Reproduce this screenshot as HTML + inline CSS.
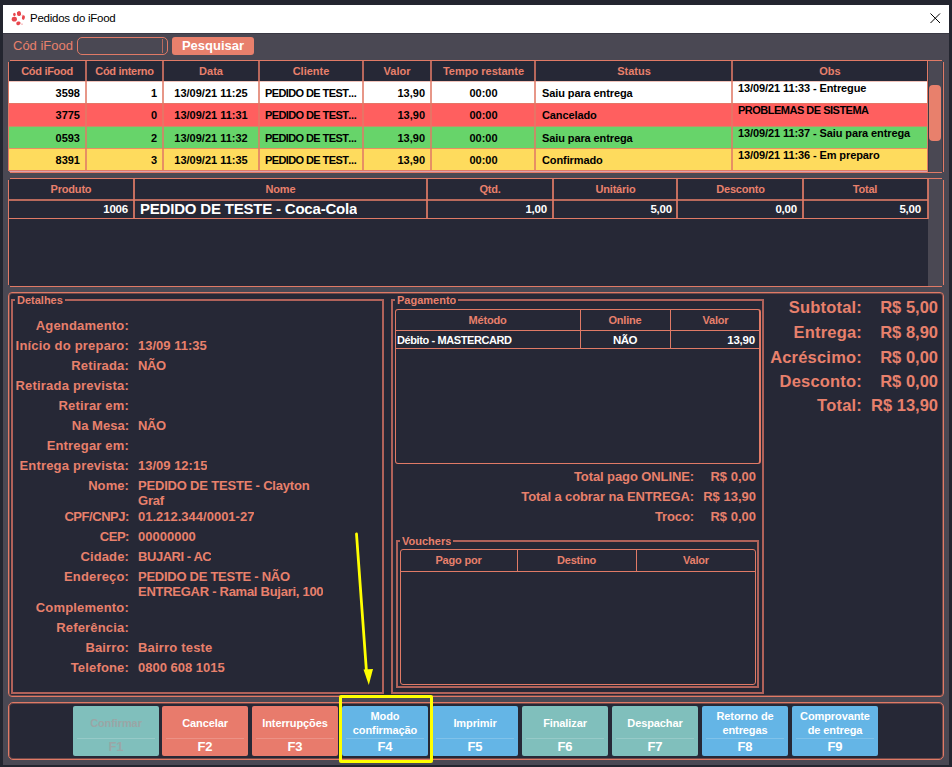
<!DOCTYPE html>
<html><head><meta charset="utf-8">
<style>
*{margin:0;padding:0;box-sizing:border-box}
html,body{width:952px;height:767px;overflow:hidden;background:#23252f;font-family:"Liberation Sans",sans-serif}
.a{position:absolute}
.t{white-space:nowrap;overflow:hidden}
</style></head><body>
<div class="a" style="left:0px;top:0px;width:952px;height:767px;background:#23252f"></div>
<div class="a" style="left:3px;top:5px;width:946px;height:760px;background:#4a4853"></div>
<div class="a" style="left:3px;top:5px;width:946px;height:28px;background:#fff"></div>
<div class="a" style="left:3px;top:33px;width:946px;height:1px;background:#3a3944"></div>
<svg class="a" style="left:10px;top:10px" width="16" height="16" viewBox="0 0 16 16"><g fill="#e8474d">
<ellipse cx="9" cy="3.6" rx="2.1" ry="2.5" transform="rotate(-15 9 3.6)"/><ellipse cx="4.4" cy="4.5" rx="1.3" ry="1.8"/><ellipse cx="4.3" cy="9.2" rx="2.6" ry="2.4"/>
<ellipse cx="8.4" cy="13.3" rx="2.2" ry="1.8" transform="rotate(-20 8.4 13.3)"/><ellipse cx="13.4" cy="7.6" rx="1.5" ry="2.3" transform="rotate(10 13.4 7.6)"/>
<circle cx="12.3" cy="5.4" r="0.8" opacity="0.35"/><circle cx="12" cy="14.2" r="0.9" opacity="0.35"/></g></svg>
<div class="a t" style="left:30px;top:12px;font-size:11.5px;color:#000;letter-spacing:-0.25px">Pedidos do iFood</div>
<svg class="a" style="left:930px;top:13px" width="11" height="11" viewBox="0 0 11 11"><path d="M0.5 0.5L10 10M10 0.5L0.5 10" stroke="#000" stroke-width="1"/></svg>
<div class="a t" style="left:13px;top:38px;font-size:13px;color:#e8806c">Cód iFood</div>
<div class="a" style="left:77px;top:37px;width:91px;height:18px;border:1px solid #e07a66;border-radius:5px"></div>
<div class="a" style="left:162px;top:39px;width:1px;height:14px;background:#b86a5e"></div>
<div class="a t" style="left:172px;top:37px;width:82px;height:18px;line-height:18px;text-align:center;font-size:13px;font-weight:bold;color:#fff;background:#e8806c;border-radius:3px">Pesquisar</div>
<div class="a" style="left:8px;top:60px;width:936px;height:113px;background:#4a4853"></div>
<div class="a" style="left:8px;top:62px;width:1px;height:109px;background:#e07a66"></div>
<div class="a" style="left:10px;top:60px;width:932px;height:1px;background:#e07a66"></div>
<div class="a" style="left:943px;top:62px;width:1px;height:110px;background:#e07a66"></div>
<div class="a" style="left:10px;top:172px;width:932px;height:1px;background:#e07a66"></div>
<div class="a" style="left:9px;top:61px;width:919px;height:20px;background:#262836;border-top-left-radius:2px"></div>
<div class="a t" style="left:8px;top:61px;width:78px;height:20px;line-height:20px;text-align:center;font-size:11px;font-weight:bold;color:#e8806c;letter-spacing:-0.3px">Cód iFood</div>
<div class="a t" style="left:86px;top:61px;width:77px;height:20px;line-height:20px;text-align:center;font-size:11px;font-weight:bold;color:#e8806c;letter-spacing:-0.3px">Cód interno</div>
<div class="a t" style="left:163px;top:61px;width:96px;height:20px;line-height:20px;text-align:center;font-size:11px;font-weight:bold;color:#e8806c;letter-spacing:0">Data</div>
<div class="a t" style="left:259px;top:61px;width:104px;height:20px;line-height:20px;text-align:center;font-size:11px;font-weight:bold;color:#e8806c;letter-spacing:0">Cliente</div>
<div class="a t" style="left:363px;top:61px;width:68px;height:20px;line-height:20px;text-align:center;font-size:11px;font-weight:bold;color:#e8806c;letter-spacing:0">Valor</div>
<div class="a t" style="left:431px;top:61px;width:105px;height:20px;line-height:20px;text-align:center;font-size:11px;font-weight:bold;color:#e8806c;letter-spacing:0">Tempo restante</div>
<div class="a t" style="left:536px;top:61px;width:196px;height:20px;line-height:20px;text-align:center;font-size:11px;font-weight:bold;color:#e8806c;letter-spacing:0">Status</div>
<div class="a t" style="left:732px;top:61px;width:196px;height:20px;line-height:20px;text-align:center;font-size:11px;font-weight:bold;color:#e8806c;letter-spacing:0">Obs</div>
<div class="a" style="left:9px;top:81px;width:919px;height:22px;background:#ffffff"></div>
<div class="a" style="left:9px;top:81px;width:919px;height:1px;background:rgba(224,122,102,0.45)"></div>
<div class="a t" style="left:8px;top:82px;width:78px;height:22px;line-height:22px;text-align:right;font-size:11px;font-weight:bold;color:#000;letter-spacing:0;padding:0 6px;box-sizing:border-box">3598</div>
<div class="a t" style="left:86px;top:82px;width:77px;height:22px;line-height:22px;text-align:right;font-size:11px;font-weight:bold;color:#000;letter-spacing:0;padding:0 6px;box-sizing:border-box">1</div>
<div class="a t" style="left:163px;top:82px;width:96px;height:22px;line-height:22px;text-align:center;font-size:11px;font-weight:bold;color:#000;letter-spacing:0;padding:0 6px;box-sizing:border-box">13/09/21 11:25</div>
<div class="a t" style="left:259px;top:82px;width:104px;height:22px;line-height:22px;text-align:left;font-size:11px;font-weight:bold;color:#000;letter-spacing:-0.6px;padding:0 6px;box-sizing:border-box">PEDIDO DE TEST<span style="letter-spacing:-0.3px">...</span></div>
<div class="a t" style="left:363px;top:82px;width:68px;height:22px;line-height:22px;text-align:right;font-size:11px;font-weight:bold;color:#000;letter-spacing:0;padding:0 6px;box-sizing:border-box">13,90</div>
<div class="a t" style="left:431px;top:82px;width:105px;height:22px;line-height:22px;text-align:center;font-size:11px;font-weight:bold;color:#000;letter-spacing:0;padding:0 6px;box-sizing:border-box">00:00</div>
<div class="a t" style="left:536px;top:82px;width:196px;height:22px;line-height:22px;text-align:left;font-size:11px;font-weight:bold;color:#000;letter-spacing:-0.1px;padding:0 6px;box-sizing:border-box">Saiu para entrega</div>
<div class="a t" style="left:732px;top:77px;width:196px;height:22px;line-height:22px;text-align:left;font-size:11px;font-weight:bold;color:#000;letter-spacing:-0.1px;padding:0 6px;box-sizing:border-box">13/09/21 11:33 - Entregue</div>
<div class="a" style="left:9px;top:103px;width:919px;height:23px;background:#ff5f5f"></div>
<div class="a" style="left:9px;top:103px;width:919px;height:1px;background:rgba(224,122,102,0.8)"></div>
<div class="a t" style="left:8px;top:104px;width:78px;height:22px;line-height:22px;text-align:right;font-size:11px;font-weight:bold;color:#000;letter-spacing:0;padding:0 6px;box-sizing:border-box">3775</div>
<div class="a t" style="left:86px;top:104px;width:77px;height:22px;line-height:22px;text-align:right;font-size:11px;font-weight:bold;color:#000;letter-spacing:0;padding:0 6px;box-sizing:border-box">0</div>
<div class="a t" style="left:163px;top:104px;width:96px;height:22px;line-height:22px;text-align:center;font-size:11px;font-weight:bold;color:#000;letter-spacing:0;padding:0 6px;box-sizing:border-box">13/09/21 11:31</div>
<div class="a t" style="left:259px;top:104px;width:104px;height:22px;line-height:22px;text-align:left;font-size:11px;font-weight:bold;color:#000;letter-spacing:-0.6px;padding:0 6px;box-sizing:border-box">PEDIDO DE TEST<span style="letter-spacing:-0.3px">...</span></div>
<div class="a t" style="left:363px;top:104px;width:68px;height:22px;line-height:22px;text-align:right;font-size:11px;font-weight:bold;color:#000;letter-spacing:0;padding:0 6px;box-sizing:border-box">13,90</div>
<div class="a t" style="left:431px;top:104px;width:105px;height:22px;line-height:22px;text-align:center;font-size:11px;font-weight:bold;color:#000;letter-spacing:0;padding:0 6px;box-sizing:border-box">00:00</div>
<div class="a t" style="left:536px;top:104px;width:196px;height:22px;line-height:22px;text-align:left;font-size:11px;font-weight:bold;color:#000;letter-spacing:-0.1px;padding:0 6px;box-sizing:border-box">Cancelado</div>
<div class="a t" style="left:732px;top:99px;width:196px;height:22px;line-height:22px;text-align:left;font-size:11px;font-weight:bold;color:#000;letter-spacing:-0.5px;padding:0 6px;box-sizing:border-box">PROBLEMAS DE SISTEMA</div>
<div class="a" style="left:9px;top:126px;width:919px;height:22px;background:#67d46a"></div>
<div class="a" style="left:9px;top:126px;width:919px;height:1px;background:rgba(224,122,102,0.8)"></div>
<div class="a t" style="left:8px;top:127px;width:78px;height:22px;line-height:22px;text-align:right;font-size:11px;font-weight:bold;color:#000;letter-spacing:0;padding:0 6px;box-sizing:border-box">0593</div>
<div class="a t" style="left:86px;top:127px;width:77px;height:22px;line-height:22px;text-align:right;font-size:11px;font-weight:bold;color:#000;letter-spacing:0;padding:0 6px;box-sizing:border-box">2</div>
<div class="a t" style="left:163px;top:127px;width:96px;height:22px;line-height:22px;text-align:center;font-size:11px;font-weight:bold;color:#000;letter-spacing:0;padding:0 6px;box-sizing:border-box">13/09/21 11:32</div>
<div class="a t" style="left:259px;top:127px;width:104px;height:22px;line-height:22px;text-align:left;font-size:11px;font-weight:bold;color:#000;letter-spacing:-0.6px;padding:0 6px;box-sizing:border-box">PEDIDO DE TEST<span style="letter-spacing:-0.3px">...</span></div>
<div class="a t" style="left:363px;top:127px;width:68px;height:22px;line-height:22px;text-align:right;font-size:11px;font-weight:bold;color:#000;letter-spacing:0;padding:0 6px;box-sizing:border-box">13,90</div>
<div class="a t" style="left:431px;top:127px;width:105px;height:22px;line-height:22px;text-align:center;font-size:11px;font-weight:bold;color:#000;letter-spacing:0;padding:0 6px;box-sizing:border-box">00:00</div>
<div class="a t" style="left:536px;top:127px;width:196px;height:22px;line-height:22px;text-align:left;font-size:11px;font-weight:bold;color:#000;letter-spacing:-0.1px;padding:0 6px;box-sizing:border-box">Saiu para entrega</div>
<div class="a t" style="left:732px;top:122px;width:196px;height:22px;line-height:22px;text-align:left;font-size:11px;font-weight:bold;color:#000;letter-spacing:-0.1px;padding:0 6px;box-sizing:border-box">13/09/21 11:37 - Saiu para entrega</div>
<div class="a" style="left:9px;top:148px;width:919px;height:22px;background:#fedb5d"></div>
<div class="a" style="left:9px;top:148px;width:919px;height:1px;background:rgba(224,122,102,0.8)"></div>
<div class="a t" style="left:8px;top:149px;width:78px;height:22px;line-height:22px;text-align:right;font-size:11px;font-weight:bold;color:#000;letter-spacing:0;padding:0 6px;box-sizing:border-box">8391</div>
<div class="a t" style="left:86px;top:149px;width:77px;height:22px;line-height:22px;text-align:right;font-size:11px;font-weight:bold;color:#000;letter-spacing:0;padding:0 6px;box-sizing:border-box">3</div>
<div class="a t" style="left:163px;top:149px;width:96px;height:22px;line-height:22px;text-align:center;font-size:11px;font-weight:bold;color:#000;letter-spacing:0;padding:0 6px;box-sizing:border-box">13/09/21 11:35</div>
<div class="a t" style="left:259px;top:149px;width:104px;height:22px;line-height:22px;text-align:left;font-size:11px;font-weight:bold;color:#000;letter-spacing:-0.6px;padding:0 6px;box-sizing:border-box">PEDIDO DE TEST<span style="letter-spacing:-0.3px">...</span></div>
<div class="a t" style="left:363px;top:149px;width:68px;height:22px;line-height:22px;text-align:right;font-size:11px;font-weight:bold;color:#000;letter-spacing:0;padding:0 6px;box-sizing:border-box">13,90</div>
<div class="a t" style="left:431px;top:149px;width:105px;height:22px;line-height:22px;text-align:center;font-size:11px;font-weight:bold;color:#000;letter-spacing:0;padding:0 6px;box-sizing:border-box">00:00</div>
<div class="a t" style="left:536px;top:149px;width:196px;height:22px;line-height:22px;text-align:left;font-size:11px;font-weight:bold;color:#000;letter-spacing:-0.1px;padding:0 6px;box-sizing:border-box">Confirmado</div>
<div class="a t" style="left:732px;top:144px;width:196px;height:22px;line-height:22px;text-align:left;font-size:11px;font-weight:bold;color:#000;letter-spacing:-0.1px;padding:0 6px;box-sizing:border-box">13/09/21 11:36 - Em preparo</div>
<div class="a" style="left:9px;top:170px;width:919px;height:1px;background:#e07a66"></div>
<div class="a" style="left:9px;top:171px;width:919px;height:1px;background:#d9a2ae;border-bottom-left-radius:2px"></div>
<div class="a" style="left:85px;top:61px;width:2px;height:110px;background:rgba(224,122,102,0.78)"></div>
<div class="a" style="left:162px;top:61px;width:2px;height:110px;background:rgba(224,122,102,0.78)"></div>
<div class="a" style="left:258px;top:61px;width:2px;height:110px;background:rgba(224,122,102,0.78)"></div>
<div class="a" style="left:362px;top:61px;width:2px;height:110px;background:rgba(224,122,102,0.78)"></div>
<div class="a" style="left:430px;top:61px;width:2px;height:110px;background:rgba(224,122,102,0.78)"></div>
<div class="a" style="left:534px;top:61px;width:2px;height:110px;background:rgba(224,122,102,0.78)"></div>
<div class="a" style="left:731px;top:61px;width:2px;height:110px;background:rgba(224,122,102,0.78)"></div>
<div class="a" style="left:927px;top:61px;width:1px;height:111px;background:#e07a66"></div>
<div class="a" style="left:928px;top:61px;width:1px;height:111px;background:#3c3b48"></div>
<div class="a" style="left:942px;top:62px;width:1px;height:110px;background:#3c3b48"></div>
<div class="a" style="left:929px;top:85px;width:12px;height:56px;background:#e8806c;border-radius:4px"></div>
<div class="a" style="left:8px;top:178px;width:936px;height:109px;background:#4a4853"></div>
<div class="a" style="left:8px;top:180px;width:1px;height:105px;background:#e07a66"></div>
<div class="a" style="left:10px;top:178px;width:932px;height:1px;background:#e07a66"></div>
<div class="a" style="left:943px;top:180px;width:1px;height:105px;background:#e07a66"></div>
<div class="a" style="left:10px;top:286px;width:932px;height:1px;background:#e07a66"></div>
<div class="a" style="left:9px;top:179px;width:919px;height:107px;background:#262836;border-radius:2px 0 0 2px"></div>
<div class="a" style="left:9px;top:199px;width:919px;height:2px;background:rgba(224,122,102,0.8)"></div>
<div class="a" style="left:9px;top:218px;width:919px;height:1px;background:#e07a66"></div>
<div class="a t" style="left:8px;top:179px;width:126px;height:20px;line-height:20px;text-align:center;font-size:11px;font-weight:bold;color:#e8806c;letter-spacing:-0.2px">Produto</div>
<div class="a" style="left:133px;top:179px;width:2px;height:40px;background:rgba(224,122,102,0.85)"></div>
<div class="a t" style="left:134px;top:179px;width:293px;height:20px;line-height:20px;text-align:center;font-size:11px;font-weight:bold;color:#e8806c;letter-spacing:-0.2px">Nome</div>
<div class="a" style="left:426px;top:179px;width:2px;height:40px;background:rgba(224,122,102,0.85)"></div>
<div class="a t" style="left:427px;top:179px;width:126px;height:20px;line-height:20px;text-align:center;font-size:11px;font-weight:bold;color:#e8806c;letter-spacing:-0.2px">Qtd.</div>
<div class="a" style="left:552px;top:179px;width:2px;height:40px;background:rgba(224,122,102,0.85)"></div>
<div class="a t" style="left:553px;top:179px;width:125px;height:20px;line-height:20px;text-align:center;font-size:11px;font-weight:bold;color:#e8806c;letter-spacing:-0.2px">Unitário</div>
<div class="a" style="left:676px;top:179px;width:2px;height:40px;background:rgba(224,122,102,0.85)"></div>
<div class="a t" style="left:678px;top:179px;width:125px;height:20px;line-height:20px;text-align:center;font-size:11px;font-weight:bold;color:#e8806c;letter-spacing:-0.2px">Desconto</div>
<div class="a" style="left:802px;top:179px;width:2px;height:40px;background:rgba(224,122,102,0.85)"></div>
<div class="a t" style="left:803px;top:179px;width:124px;height:20px;line-height:20px;text-align:center;font-size:11px;font-weight:bold;color:#e8806c;letter-spacing:-0.2px">Total</div>
<div class="a" style="left:927px;top:179px;width:2px;height:40px;background:rgba(224,122,102,0.85)"></div>
<div class="a t" style="left:8px;top:200px;width:126px;height:18px;line-height:18px;text-align:right;font-size:11.5px;font-weight:bold;color:#fff;letter-spacing:-0.2px;padding-right:6px;box-sizing:border-box">1006</div>
<div class="a t" style="left:140px;top:200px;height:18px;line-height:18px;font-size:15px;font-weight:bold;color:#fff;letter-spacing:-0.2px">PEDIDO DE TESTE - Coca-Cola</div>
<div class="a t" style="left:427px;top:200px;width:126px;height:18px;line-height:18px;text-align:right;font-size:11.5px;font-weight:bold;color:#fff;letter-spacing:-0.2px;padding-right:6px;box-sizing:border-box">1,00</div>
<div class="a t" style="left:553px;top:200px;width:125px;height:18px;line-height:18px;text-align:right;font-size:11.5px;font-weight:bold;color:#fff;letter-spacing:-0.2px;padding-right:6px;box-sizing:border-box">5,00</div>
<div class="a t" style="left:678px;top:200px;width:125px;height:18px;line-height:18px;text-align:right;font-size:11.5px;font-weight:bold;color:#fff;letter-spacing:-0.2px;padding-right:6px;box-sizing:border-box">0,00</div>
<div class="a t" style="left:803px;top:200px;width:124px;height:18px;line-height:18px;text-align:right;font-size:11.5px;font-weight:bold;color:#fff;letter-spacing:-0.2px;padding-right:6px;box-sizing:border-box">5,00</div>
<div class="a" style="left:8px;top:292px;width:936px;height:405px;background:#262836;border:1px solid #e07a66;border-radius:4px;box-shadow:inset 0 0 0 1px rgba(224,122,102,0.4)"></div>
<div class="a" style="left:11px;top:299px;width:2px;height:395px;background:#b0625a"></div>
<div class="a" style="left:11px;top:692px;width:373px;height:2px;background:#b0625a"></div>
<div class="a" style="left:382px;top:299px;width:2px;height:395px;background:#b0625a"></div>
<div class="a" style="left:11px;top:299px;width:4px;height:2px;background:#b0625a"></div>
<div class="a" style="left:65px;top:299px;width:319px;height:2px;background:#b0625a"></div>
<div class="a t" style="left:17px;top:294px;height:13px;line-height:13px;font-size:11px;font-weight:bold;color:#e8806c">Detalhes</div>
<div class="a t" style="left:14px;top:318px;width:115px;text-align:right;font-size:13px;font-weight:bold;color:#e8806c;letter-spacing:0.19px">Agendamento:</div>
<div class="a t" style="left:14px;top:338px;width:115px;text-align:right;font-size:13px;font-weight:bold;color:#e8806c;letter-spacing:0.2px">Início do preparo:</div>
<div class="a t" style="left:138px;top:338px;font-size:13px;font-weight:bold;color:#e8806c;line-height:15px;letter-spacing:0px">13/09 11:35</div>
<div class="a t" style="left:14px;top:358px;width:115px;text-align:right;font-size:13px;font-weight:bold;color:#e8806c;letter-spacing:0.16px">Retirada:</div>
<div class="a t" style="left:138px;top:358px;font-size:13px;font-weight:bold;color:#e8806c;line-height:15px;letter-spacing:-0.45px">NÃO</div>
<div class="a t" style="left:14px;top:378px;width:115px;text-align:right;font-size:13px;font-weight:bold;color:#e8806c;letter-spacing:0.21px">Retirada prevista:</div>
<div class="a t" style="left:14px;top:398px;width:115px;text-align:right;font-size:13px;font-weight:bold;color:#e8806c;letter-spacing:0.17px">Retirar em:</div>
<div class="a t" style="left:14px;top:418px;width:115px;text-align:right;font-size:13px;font-weight:bold;color:#e8806c;letter-spacing:0.02px">Na Mesa:</div>
<div class="a t" style="left:138px;top:418px;font-size:13px;font-weight:bold;color:#e8806c;line-height:15px;letter-spacing:-0.45px">NÃO</div>
<div class="a t" style="left:14px;top:438px;width:115px;text-align:right;font-size:13px;font-weight:bold;color:#e8806c;letter-spacing:0.18px">Entregar em:</div>
<div class="a t" style="left:14px;top:458px;width:115px;text-align:right;font-size:13px;font-weight:bold;color:#e8806c;letter-spacing:0.2px">Entrega prevista:</div>
<div class="a t" style="left:138px;top:458px;font-size:13px;font-weight:bold;color:#e8806c;line-height:15px;letter-spacing:0px">13/09 12:15</div>
<div class="a t" style="left:14px;top:478px;width:115px;text-align:right;font-size:13px;font-weight:bold;color:#e8806c;letter-spacing:0.08px">Nome:</div>
<div class="a t" style="left:138px;top:478px;font-size:13px;font-weight:bold;color:#e8806c;line-height:15px;letter-spacing:-0.19px">PEDIDO DE TESTE - Clayton<br>Graf</div>
<div class="a t" style="left:14px;top:509px;width:115px;text-align:right;font-size:13px;font-weight:bold;color:#e8806c;letter-spacing:-0.45px">CPF/CNPJ:</div>
<div class="a t" style="left:138px;top:509px;font-size:13px;font-weight:bold;color:#e8806c;line-height:15px;letter-spacing:0px">01.212.344/0001-27</div>
<div class="a t" style="left:14px;top:529px;width:115px;text-align:right;font-size:13px;font-weight:bold;color:#e8806c;letter-spacing:-0.45px">CEP:</div>
<div class="a t" style="left:138px;top:529px;font-size:13px;font-weight:bold;color:#e8806c;line-height:15px;letter-spacing:0px">00000000</div>
<div class="a t" style="left:14px;top:549px;width:115px;text-align:right;font-size:13px;font-weight:bold;color:#e8806c;letter-spacing:0.13px">Cidade:</div>
<div class="a t" style="left:138px;top:549px;font-size:13px;font-weight:bold;color:#e8806c;line-height:15px;letter-spacing:-0.45px">BUJARI - AC</div>
<div class="a t" style="left:14px;top:569px;width:115px;text-align:right;font-size:13px;font-weight:bold;color:#e8806c;letter-spacing:0.16px">Endereço:</div>
<div class="a t" style="left:138px;top:569px;font-size:13px;font-weight:bold;color:#e8806c;line-height:15px;letter-spacing:-0.27px">PEDIDO DE TESTE - NÃO<br>ENTREGAR - Ramal Bujari, 100</div>
<div class="a t" style="left:14px;top:600px;width:115px;text-align:right;font-size:13px;font-weight:bold;color:#e8806c;letter-spacing:0.19px">Complemento:</div>
<div class="a t" style="left:14px;top:620px;width:115px;text-align:right;font-size:13px;font-weight:bold;color:#e8806c;letter-spacing:0.18px">Referência:</div>
<div class="a t" style="left:14px;top:640px;width:115px;text-align:right;font-size:13px;font-weight:bold;color:#e8806c;letter-spacing:0.13px">Bairro:</div>
<div class="a t" style="left:138px;top:640px;font-size:13px;font-weight:bold;color:#e8806c;line-height:15px;letter-spacing:0.19px">Bairro teste</div>
<div class="a t" style="left:14px;top:660px;width:115px;text-align:right;font-size:13px;font-weight:bold;color:#e8806c;letter-spacing:0.16px">Telefone:</div>
<div class="a t" style="left:138px;top:660px;font-size:13px;font-weight:bold;color:#e8806c;line-height:15px;letter-spacing:0px">0800 608 1015</div>
<div class="a" style="left:391px;top:299px;width:2px;height:395px;background:#b0625a"></div>
<div class="a" style="left:391px;top:692px;width:373px;height:2px;background:#b0625a"></div>
<div class="a" style="left:762px;top:299px;width:2px;height:395px;background:#b0625a"></div>
<div class="a" style="left:391px;top:299px;width:4px;height:2px;background:#b0625a"></div>
<div class="a" style="left:458px;top:299px;width:306px;height:2px;background:#b0625a"></div>
<div class="a t" style="left:397px;top:294px;height:13px;line-height:13px;font-size:11px;font-weight:bold;color:#e8806c">Pagamento</div>
<div class="a" style="left:395px;top:309px;width:366px;height:155px;border:1px solid #e07a66;border-radius:3px;border-right-width:2px"></div>
<div class="a" style="left:395px;top:330px;width:366px;height:1px;background:#e07a66"></div>
<div class="a" style="left:395px;top:348px;width:366px;height:1px;background:#e07a66"></div>
<div class="a" style="left:580px;top:309px;width:1px;height:40px;background:#e07a66"></div>
<div class="a" style="left:670px;top:309px;width:1px;height:40px;background:#e07a66"></div>
<div class="a t" style="left:395px;top:310px;width:185px;height:20px;line-height:20px;text-align:center;font-size:11px;font-weight:bold;color:#e8806c;letter-spacing:-0.2px">Método</div>
<div class="a t" style="left:580px;top:310px;width:90px;height:20px;line-height:20px;text-align:center;font-size:11px;font-weight:bold;color:#e8806c;letter-spacing:-0.2px">Online</div>
<div class="a t" style="left:670px;top:310px;width:91px;height:20px;line-height:20px;text-align:center;font-size:11px;font-weight:bold;color:#e8806c;letter-spacing:-0.2px">Valor</div>
<div class="a t" style="left:397px;top:332px;height:17px;line-height:17px;font-size:11px;font-weight:bold;color:#fff;letter-spacing:-0.4px">Débito - MASTERCARD</div>
<div class="a t" style="left:580px;top:332px;width:90px;height:17px;line-height:17px;text-align:center;font-size:11.5px;font-weight:bold;color:#fff;letter-spacing:-0.6px">NÃO</div>
<div class="a t" style="left:670px;top:332px;width:91px;height:17px;line-height:17px;text-align:right;font-size:11.5px;font-weight:bold;color:#fff;letter-spacing:-0.2px;padding-right:6px;box-sizing:border-box">13,90</div>
<div class="a t" style="left:394px;top:469px;width:300px;text-align:right;font-size:13px;font-weight:bold;color:#e8806c;letter-spacing:-0.1px">Total pago ONLINE:</div>
<div class="a t" style="left:656px;top:469px;width:100px;text-align:right;font-size:13px;font-weight:bold;color:#e8806c">R$ 0,00</div>
<div class="a t" style="left:394px;top:489px;width:300px;text-align:right;font-size:13px;font-weight:bold;color:#e8806c;letter-spacing:-0.1px">Total a cobrar na ENTREGA:</div>
<div class="a t" style="left:656px;top:489px;width:100px;text-align:right;font-size:13px;font-weight:bold;color:#e8806c">R$ 13,90</div>
<div class="a t" style="left:394px;top:509px;width:300px;text-align:right;font-size:13px;font-weight:bold;color:#e8806c;letter-spacing:-0.1px">Troco:</div>
<div class="a t" style="left:656px;top:509px;width:100px;text-align:right;font-size:13px;font-weight:bold;color:#e8806c">R$ 0,00</div>
<div class="a" style="left:396px;top:540px;width:2px;height:148px;background:#b0625a"></div>
<div class="a" style="left:396px;top:686px;width:363px;height:2px;background:#b0625a"></div>
<div class="a" style="left:757px;top:540px;width:2px;height:148px;background:#b0625a"></div>
<div class="a" style="left:396px;top:540px;width:4px;height:2px;background:#b0625a"></div>
<div class="a" style="left:453px;top:540px;width:306px;height:2px;background:#b0625a"></div>
<div class="a t" style="left:402px;top:535px;height:13px;line-height:13px;font-size:11px;font-weight:bold;color:#e8806c">Vouchers</div>
<div class="a" style="left:400px;top:549px;width:356px;height:136px;border:1px solid #e07a66;border-radius:3px"></div>
<div class="a" style="left:400px;top:571px;width:356px;height:1px;background:#e07a66"></div>
<div class="a" style="left:517px;top:549px;width:1px;height:22px;background:#e07a66"></div>
<div class="a" style="left:636px;top:549px;width:1px;height:22px;background:#e07a66"></div>
<div class="a t" style="left:400px;top:550px;width:117px;height:21px;line-height:21px;text-align:center;font-size:11px;font-weight:bold;color:#e8806c;letter-spacing:-0.2px">Pago por</div>
<div class="a t" style="left:517px;top:550px;width:119px;height:21px;line-height:21px;text-align:center;font-size:11px;font-weight:bold;color:#e8806c;letter-spacing:-0.2px">Destino</div>
<div class="a t" style="left:636px;top:550px;width:120px;height:21px;line-height:21px;text-align:center;font-size:11px;font-weight:bold;color:#e8806c;letter-spacing:-0.2px">Valor</div>
<div class="a t" style="left:700px;top:298px;width:162px;text-align:right;font-size:16.5px;font-weight:bold;color:#e8806c;letter-spacing:0.2px">Subtotal:</div>
<div class="a t" style="left:838px;top:298px;width:100px;text-align:right;font-size:16.5px;font-weight:bold;color:#e8806c">R$ 5,00</div>
<div class="a t" style="left:700px;top:323px;width:162px;text-align:right;font-size:16.5px;font-weight:bold;color:#e8806c;letter-spacing:0.2px">Entrega:</div>
<div class="a t" style="left:838px;top:323px;width:100px;text-align:right;font-size:16.5px;font-weight:bold;color:#e8806c">R$ 8,90</div>
<div class="a t" style="left:700px;top:348px;width:162px;text-align:right;font-size:16.5px;font-weight:bold;color:#e8806c;letter-spacing:0.2px">Acréscimo:</div>
<div class="a t" style="left:838px;top:348px;width:100px;text-align:right;font-size:16.5px;font-weight:bold;color:#e8806c">R$ 0,00</div>
<div class="a t" style="left:700px;top:372px;width:162px;text-align:right;font-size:16.5px;font-weight:bold;color:#e8806c;letter-spacing:0.2px">Desconto:</div>
<div class="a t" style="left:838px;top:372px;width:100px;text-align:right;font-size:16.5px;font-weight:bold;color:#e8806c">R$ 0,00</div>
<div class="a t" style="left:700px;top:396px;width:162px;text-align:right;font-size:16.5px;font-weight:bold;color:#e8806c;letter-spacing:0.2px">Total:</div>
<div class="a t" style="left:838px;top:396px;width:100px;text-align:right;font-size:16.5px;font-weight:bold;color:#e8806c">R$ 13,90</div>
<div class="a" style="left:8px;top:702px;width:936px;height:58px;background:#262836;border:1px solid #e07a66;border-radius:5px;box-shadow:inset 0 0 0 1px rgba(224,122,102,0.4)"></div>
<div class="a" style="left:73px;top:706px;width:86px;height:50px;background:#80bfbc;border-radius:2px"></div>
<div class="a" style="left:77px;top:738px;width:78px;height:1px;background:rgba(255,255,255,0.18)"></div>
<div class="a t" style="left:73px;top:716px;width:86px;height:14px;line-height:14px;text-align:center;font-size:11px;font-weight:bold;color:#9aa6a6;letter-spacing:-0.1px">Confirmar</div>
<div class="a t" style="left:73px;top:739px;width:86px;height:15px;line-height:15px;text-align:center;font-size:13px;font-weight:bold;color:#9aa6a6">F1</div>
<div class="a" style="left:162px;top:706px;width:86px;height:50px;background:#e87b6c;border-radius:2px"></div>
<div class="a" style="left:166px;top:738px;width:78px;height:1px;background:rgba(255,255,255,0.18)"></div>
<div class="a t" style="left:162px;top:716px;width:86px;height:14px;line-height:14px;text-align:center;font-size:11px;font-weight:bold;color:#fff;letter-spacing:-0.1px">Cancelar</div>
<div class="a t" style="left:162px;top:739px;width:86px;height:15px;line-height:15px;text-align:center;font-size:13px;font-weight:bold;color:#fff">F2</div>
<div class="a" style="left:252px;top:706px;width:86px;height:50px;background:#e87b6c;border-radius:2px"></div>
<div class="a" style="left:256px;top:738px;width:78px;height:1px;background:rgba(255,255,255,0.18)"></div>
<div class="a t" style="left:252px;top:716px;width:86px;height:14px;line-height:14px;text-align:center;font-size:11px;font-weight:bold;color:#fff;letter-spacing:-0.1px">Interrupções</div>
<div class="a t" style="left:252px;top:739px;width:86px;height:15px;line-height:15px;text-align:center;font-size:13px;font-weight:bold;color:#fff">F3</div>
<div class="a" style="left:342px;top:706px;width:86px;height:50px;background:#64b5e6;border-radius:2px"></div>
<div class="a" style="left:346px;top:738px;width:78px;height:1px;background:rgba(255,255,255,0.18)"></div>
<div class="a t" style="left:342px;top:710px;width:86px;text-align:center;font-size:11px;font-weight:bold;color:#fff;line-height:13.5px;letter-spacing:-0.1px">Modo<br>confirmação</div>
<div class="a t" style="left:342px;top:739px;width:86px;height:15px;line-height:15px;text-align:center;font-size:13px;font-weight:bold;color:#fff">F4</div>
<div class="a" style="left:432px;top:706px;width:86px;height:50px;background:#64b5e6;border-radius:2px"></div>
<div class="a" style="left:436px;top:738px;width:78px;height:1px;background:rgba(255,255,255,0.18)"></div>
<div class="a t" style="left:432px;top:716px;width:86px;height:14px;line-height:14px;text-align:center;font-size:11px;font-weight:bold;color:#fff;letter-spacing:-0.1px">Imprimir</div>
<div class="a t" style="left:432px;top:739px;width:86px;height:15px;line-height:15px;text-align:center;font-size:13px;font-weight:bold;color:#fff">F5</div>
<div class="a" style="left:522px;top:706px;width:86px;height:50px;background:#80bfbc;border-radius:2px"></div>
<div class="a" style="left:526px;top:738px;width:78px;height:1px;background:rgba(255,255,255,0.18)"></div>
<div class="a t" style="left:522px;top:716px;width:86px;height:14px;line-height:14px;text-align:center;font-size:11px;font-weight:bold;color:#fff;letter-spacing:-0.1px">Finalizar</div>
<div class="a t" style="left:522px;top:739px;width:86px;height:15px;line-height:15px;text-align:center;font-size:13px;font-weight:bold;color:#fff">F6</div>
<div class="a" style="left:612px;top:706px;width:86px;height:50px;background:#80bfbc;border-radius:2px"></div>
<div class="a" style="left:616px;top:738px;width:78px;height:1px;background:rgba(255,255,255,0.18)"></div>
<div class="a t" style="left:612px;top:716px;width:86px;height:14px;line-height:14px;text-align:center;font-size:11px;font-weight:bold;color:#fff;letter-spacing:-0.1px">Despachar</div>
<div class="a t" style="left:612px;top:739px;width:86px;height:15px;line-height:15px;text-align:center;font-size:13px;font-weight:bold;color:#fff">F7</div>
<div class="a" style="left:702px;top:706px;width:86px;height:50px;background:#64b5e6;border-radius:2px"></div>
<div class="a" style="left:706px;top:738px;width:78px;height:1px;background:rgba(255,255,255,0.18)"></div>
<div class="a t" style="left:702px;top:710px;width:86px;text-align:center;font-size:11px;font-weight:bold;color:#fff;line-height:13.5px;letter-spacing:-0.1px">Retorno de<br>entregas</div>
<div class="a t" style="left:702px;top:739px;width:86px;height:15px;line-height:15px;text-align:center;font-size:13px;font-weight:bold;color:#fff">F8</div>
<div class="a" style="left:792px;top:706px;width:86px;height:50px;background:#64b5e6;border-radius:2px"></div>
<div class="a" style="left:796px;top:738px;width:78px;height:1px;background:rgba(255,255,255,0.18)"></div>
<div class="a t" style="left:792px;top:710px;width:86px;text-align:center;font-size:11px;font-weight:bold;color:#fff;line-height:13.5px;letter-spacing:-0.1px">Comprovante<br>de entrega</div>
<div class="a t" style="left:792px;top:739px;width:86px;height:15px;line-height:15px;text-align:center;font-size:13px;font-weight:bold;color:#fff">F9</div>
<div class="a" style="left:339px;top:695px;width:94px;height:68px;border:3px solid #ffff00;border-radius:2px"></div>
<svg class="a" style="left:0;top:0" width="952" height="767"><path d="M356.5 534 L366.5 672" stroke="#ffff00" stroke-width="2.8" stroke-linecap="round"/><path d="M363.5 669.5 L368.8 685 L373 669 Z" fill="#ffff00"/></svg>
</body></html>
